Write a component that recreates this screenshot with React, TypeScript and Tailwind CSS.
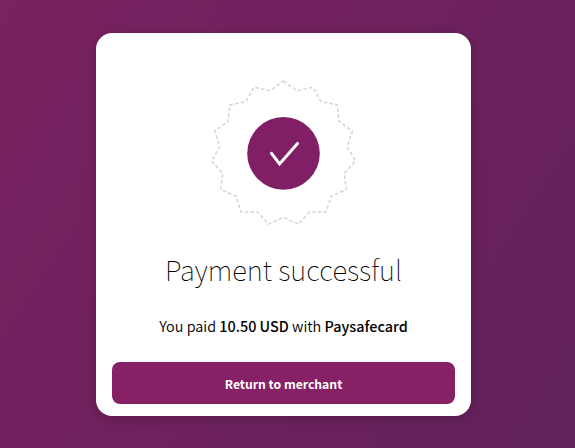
import React from 'react'

const POINTS = 15
const OUTER_RADIUS = 72.4
const INNER_RADIUS = 64

const starPoints = Array.from({ length: POINTS * 2 }, (_, i) => {
  const radius = i % 2 === 0 ? OUTER_RADIUS : INNER_RADIUS
  const angle = (Math.PI * i) / POINTS
  return `${(radius * Math.sin(angle)).toFixed(2)},${(-radius * Math.cos(angle)).toFixed(2)}`
}).join(' ')

function SuccessBadge() {
  return (
    <svg
      className="mx-auto block h-[150px] w-[150px]"
      viewBox="-74.5 -75.4 150 150"
      fill="none"
      aria-hidden="true"
    >
      <polygon
        points={starPoints}
        stroke="#d3d3d3"
        strokeWidth="1.45"
        strokeDasharray="3.6 2.2"
      />
      <circle r="36.3" fill="#801f66" />
      <path
        d="M-12 -0.1 L-3.9 10.5 L14 -9.9"
        stroke="#fff"
        strokeWidth="3"
        strokeLinecap="round"
      />
    </svg>
  )
}

function ReturnButton({ children }: { children: React.ReactNode }) {
  return (
    <button
      type="button"
      className="mt-auto h-[42px] w-full rounded-lg bg-[#862165] pt-0.5 text-[12.2px] font-bold text-white"
    >
      {children}
    </button>
  )
}

export default function App() {
  return (
    <div className="h-screen overflow-hidden bg-linear-[123deg] from-[#7b2261] to-[#61215a] pt-[33px] pl-24 font-['Noto_Sans_CJK_SC',sans-serif] text-black">
      <main className="flex h-[383px] w-[375px] flex-col rounded-2xl bg-white px-4 pt-[45px] pb-3 text-center shadow-[0_2px_12px_rgba(0,0,0,0.2)]">
        <SuccessBadge />
        <h1 className="mt-[21px] text-[27.6px] leading-10 font-thin whitespace-nowrap">
          Payment successful
        </h1>
        <p className="mt-[25px] text-[14.4px] leading-6 font-[350] whitespace-nowrap">
          You paid <b className="font-medium">10.50 USD</b> with{' '}
          <b className="font-medium">Paysafecard</b>
        </p>
        <ReturnButton>Return to merchant</ReturnButton>
      </main>
    </div>
  )
}
